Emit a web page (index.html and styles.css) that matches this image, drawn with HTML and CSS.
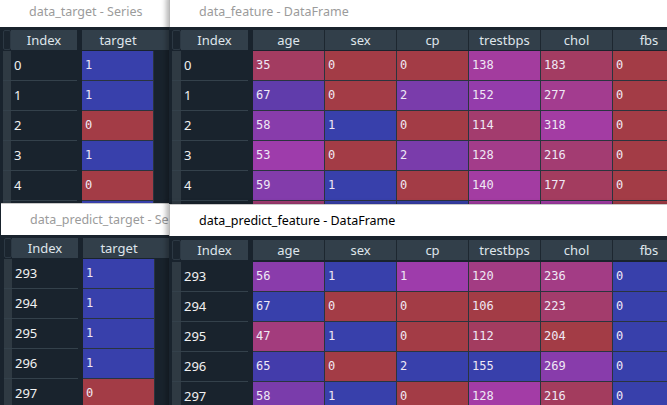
FILE: index.html
```html
<!DOCTYPE html>
<html lang="en">
<head>
    <meta charset="utf-8" />
    <title>Variable explorer</title>
    <link rel="stylesheet" href="styles.css">
</head>
<body>
    <div class="desk">
        <div class="win" id="w1">
            <div class="title">data_target - Series</div>
            <div class="body" id="b1"></div>
        </div>
        <div class="win low" id="w3">
            <div class="title">data_predict_target - Series</div>
            <div class="body" id="b3"></div>
        </div>
        <div class="win df" id="w2">
            <div class="title">data_feature - DataFrame</div>
            <div class="body" id="b2"></div>
        </div>
        <div class="win df low active" id="w4">
            <div class="title">data_predict_feature - DataFrame</div>
            <div class="body" id="b4"></div>
        </div>
    </div>
    <script src="script.js"></script>
</body>
</html>
```

FILE: styles.css
```css
* {
    box-sizing: border-box;
}

body {
    margin: 0;
    background: #19232d;
    font-family: "Noto Sans", "Open Sans", sans-serif;
}

.desk {
    position: relative;
    width: 667px;
    height: 405px;
    overflow: hidden;
}

.win {
    position: absolute;
    display: flex;
    flex-direction: column;
    background: #19232d;
    overflow: hidden;
}

#w1 { left: 0; top: -4px; width: 172px; height: 208px; z-index: 1; }
#w3 { left: 1px; top: 203px; width: 168px; height: 215px; z-index: 2; }
#w2 { left: 169px; top: -4px; width: 530px; height: 208px; z-index: 3; }
#w4 { left: 169px; top: 204px; width: 530px; height: 215px; z-index: 4; }

.df {
    box-shadow: -3px 0 5px rgba(0, 0, 0, 0.28);
}

.title {
    flex: none;
    height: 31px;
    line-height: 31px;
    padding-left: 29px;
    background: #fff;
    color: #9b9b9b;
    font-size: 12.5px;
    white-space: nowrap;
    overflow: hidden;
}

.low .title {
    height: 32px;
    border-top: 1px solid #c8c8c8;
}

.df .title {
    border-left: 1px solid #b8b8b8;
}

.active .title {
    color: #000;
}

.body {
    flex: 1;
    display: flex;
    padding: 3px 0 0 3px;
    overflow: hidden;
}

#w4 .body {
    padding-top: 4px;
}

.index-pane {
    flex: none;
}

.data-pane {
    flex: 1;
    margin-left: 5px;
}

.hrow {
    display: flex;
    height: 20px;
    margin-bottom: 1px;
}

#w4 .hrow {
    margin-bottom: 2px;
}

.data-pane .hrow {
    background: #323f4a;
}

.corner {
    width: 8px;
    border: 1px solid #2c3843;
    border-radius: 2px;
    background: #1b252f;
}

.hcell {
    flex: none;
    width: 72px;
    background: #323f4a;
    border-right: 1px solid #1d2730;
    color: #dfe5eb;
    font-size: 13px;
    line-height: 20px;
    text-align: center;
}

.hcell:last-child {
    border-right: none;
}

.hcell.idx {
    width: 66px;
}

.irow {
    display: flex;
    height: 30px;
    border-bottom: 1px solid #34414b;
}

.gutter {
    width: 8px;
    background: #2f3a43;
}

.icell {
    width: 66px;
    padding-left: 3px;
    color: #f2f2f2;
    font-size: 13px;
    line-height: 29px;
}

.df .corner, .df .gutter {
    width: 9px;
}

.df .hcell.idx, .df .icell {
    width: 67px;
}

.drow {
    display: flex;
    height: 30px;
}

.dcell {
    flex: none;
    width: 72px;
    height: 30px;
    padding-left: 3px;
    border-right: 1px solid #2a343e;
    border-bottom: 1px solid #2a343e;
    color: #efe8f5;
    font-family: "DejaVu Sans Mono", monospace;
    font-size: 12px;
    line-height: 29px;
}
```

FILE: script.js
```js
// spyder-like colouring: biggest value blue, smallest red
var BG = [25, 35, 45];

function hsv(h, s, v) {
    var i = Math.floor(h * 6), f = h * 6 - i;
    var p = v * (1 - s), q = v * (1 - f * s), t = v * (1 - (1 - f) * s);
    switch (i % 6) {
        case 0: return [v, t, p];
        case 1: return [q, v, p];
        case 2: return [p, v, t];
        case 3: return [p, q, v];
        case 4: return [t, p, v];
        default: return [v, p, q];
    }
}

function cellColor(val, min, max) {
    var hue = max === min ? 0.66 : 0.66 + 0.33 * (max - val) / (max - min);
    var c = hsv(hue, 0.7, 1.0);
    var rgb = c.map(function (x, k) {
        return Math.round(x * 255 * 0.6 + BG[k] * 0.4);
    });
    return "rgb(" + rgb.join(",") + ")";
}

// the last row of the top windows only peeks out under the windows below,
// so "shown" limits which rows get their text
var tables = {
    b1: {
        index: [0, 1, 2, 3, 4, 5], shown: 5,
        cols: [{ name: "target", min: 0, max: 1, v: [1, 1, 0, 1, 0, 1] }]
    },
    b3: {
        index: [293, 294, 295, 296, 297], shown: 5,
        cols: [{ name: "target", min: 0, max: 1, v: [1, 1, 1, 1, 0] }]
    },
    b2: {
        index: [0, 1, 2, 3, 4, 5], shown: 5,
        cols: [
            { name: "age", min: 29, max: 77, v: [35, 67, 58, 53, 59, 39] },
            { name: "sex", min: 0, max: 1, v: [0, 0, 1, 0, 1, 1] },
            { name: "cp", min: 0, max: 3, v: [0, 2, 0, 2, 0, 3] },
            { name: "trestbps", min: 94, max: 200, v: [138, 152, 114, 128, 140, 140] },
            { name: "chol", min: 126, max: 564, v: [183, 277, 318, 216, 177, 321] },
            { name: "fbs", min: 0, max: 1, v: [0, 0, 0, 0, 0, 0] }
        ]
    },
    b4: {
        index: [293, 294, 295, 296, 297], shown: 5,
        cols: [
            { name: "age", min: 40, max: 67, v: [56, 67, 47, 65, 58] },
            { name: "sex", min: 0, max: 1, v: [1, 0, 1, 0, 1] },
            { name: "cp", min: 0, max: 2, v: [1, 0, 0, 2, 0] },
            { name: "trestbps", min: 106, max: 155, v: [120, 106, 112, 155, 128] },
            { name: "chol", min: 204, max: 312, v: [236, 223, 204, 269, 216] },
            { name: "fbs", min: 0, max: 0, v: [0, 0, 0, 0, 0] }
        ]
    }
};

function el(cls, text) {
    var d = document.createElement("div");
    d.className = cls;
    if (text !== undefined) d.textContent = text;
    return d;
}

Object.keys(tables).forEach(function (id) {
    var t = tables[id];
    var body = document.getElementById(id);

    var idxPane = el("index-pane");
    var head = el("hrow");
    head.appendChild(el("corner"));
    head.appendChild(el("hcell idx", "Index"));
    idxPane.appendChild(head);
    t.index.forEach(function (i, r) {
        var row = el("irow");
        row.appendChild(el("gutter"));
        row.appendChild(el("icell", r < t.shown ? i : ""));
        idxPane.appendChild(row);
    });

    var dataPane = el("data-pane");
    var dhead = el("hrow");
    t.cols.forEach(function (c) {
        dhead.appendChild(el("hcell", c.name));
    });
    dataPane.appendChild(dhead);
    t.index.forEach(function (i, r) {
        var row = el("drow");
        t.cols.forEach(function (c) {
            var cell = el("dcell", r < t.shown ? c.v[r] : "");
            cell.style.background = cellColor(c.v[r], c.min, c.max);
            row.appendChild(cell);
        });
        dataPane.appendChild(row);
    });

    body.appendChild(idxPane);
    body.appendChild(dataPane);
});
```
